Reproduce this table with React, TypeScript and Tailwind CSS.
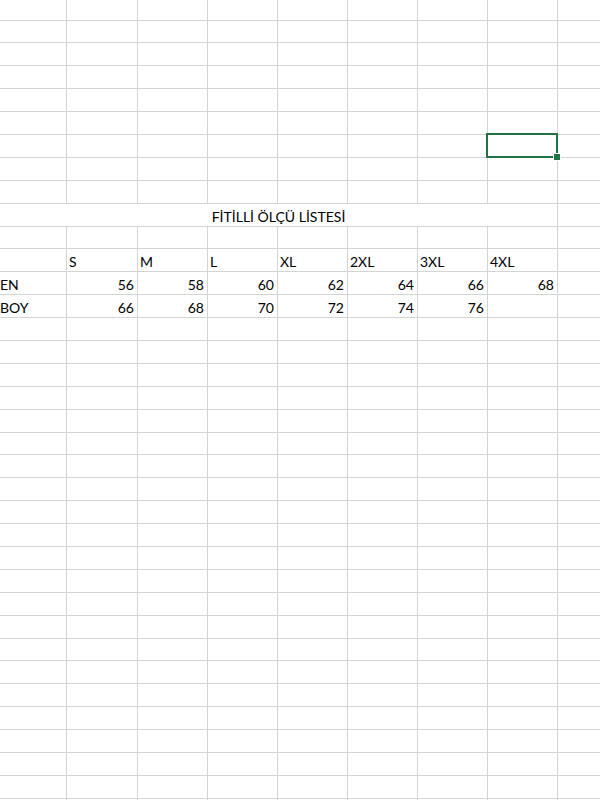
const COLS = [67, 71, 70, 70, 70, 70, 70, 70, 60]
const ROWS = 36

type Cell = { text?: string; align?: 'l' | 'r' }

const sizes = ['S', 'M', 'L', 'XL', '2XL', '3XL', '4XL']
const en = ['56', '58', '60', '62', '64', '66', '68']
const boy = ['66', '68', '70', '72', '74', '76']

// row index -> cells
function rowData(r: number): Cell[] {
    if (r === 11) return [{}, ...sizes.map((s) => ({ text: s, align: 'l' as const })), {}]
    if (r === 12) return [{ text: 'EN', align: 'l' }, ...en.map((n) => ({ text: n, align: 'r' as const })), {}]
    if (r === 13) return [{ text: 'BOY', align: 'l' }, ...boy.map((n) => ({ text: n, align: 'r' as const })), {}, {}]
    return COLS.map(() => ({}))
}

function GridCell({ w, cell, selected, first }: { w: number; cell: Cell; selected?: boolean; first?: boolean }) {
    return (
        <div
            className={`relative shrink-0 h-full border-r border-b border-[#d4d4d4] flex items-end pb-[1px] leading-[16px] ${
                cell.align === 'r' ? 'justify-end pr-[3px]' : first ? 'pl-0' : 'pl-[2px]'
            }`}
            style={{ width: w }}
        >
            {cell.text}
            {selected && (
                <div className="absolute -left-[2px] -top-[2px] -right-[1px] -bottom-[1px] border-2 border-[#217346] z-10">
                    <div className="absolute -right-[5px] -bottom-[5px] w-[6px] h-[6px] bg-[#217346] border border-white box-content" />
                </div>
            )}
        </div>
    )
}

export default function App() {
    return (
        <div className="w-[600px] h-[800px] overflow-hidden bg-white text-black text-[14px] font-['Lato',sans-serif]">
            {Array.from({ length: ROWS }).map((_, r) => {
                const h = r === 0 ? 'h-[20.5px]' : 'h-[22.9px]'
                if (r === 9) {
                    // merged title row
                    return (
                        <div key={r} className={`flex ${h}`}>
                            <div className="shrink-0 w-[558px] h-full border-r border-b border-[#d4d4d4] flex items-end justify-center pb-[1px] leading-[16px]">
                                FİTİLLİ ÖLÇÜ LİSTESİ
                            </div>
                            <div className="shrink-0 w-[60px] h-full border-r border-b border-[#d4d4d4]" />
                        </div>
                    )
                }
                const cells = rowData(r)
                return (
                    <div key={r} className={`flex ${h}`}>
                        {COLS.map((w, c) => (
                            <GridCell key={c} w={w} cell={cells[c] ?? {}} first={c === 0} selected={r === 6 && c === 7} />
                        ))}
                    </div>
                )
            })}
        </div>
    )
}
